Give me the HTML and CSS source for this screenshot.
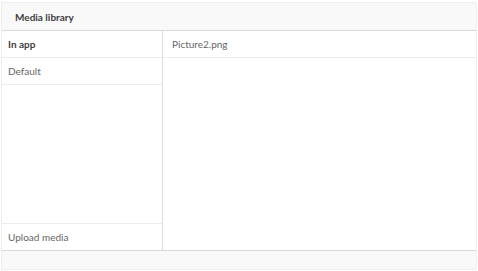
FILE: index.html
```html
<!DOCTYPE html>
<html>
<head>
<meta charset="utf-8">
<link rel="stylesheet" href="styles.css">
</head>
<body>
<div class="dialog">
  <div class="header"><span class="title">Media library</span></div>
  <div class="main">
    <div class="left">
      <div class="row bold">In app</div>
      <div class="row">Default</div>
      <div class="spacer"></div>
      <div class="row upload">Upload media</div>
    </div>
    <div class="right">
      <div class="row file">Picture2.png</div>
    </div>
  </div>
  <div class="footer"></div>
</div>
</body>
</html>
```
FILE: styles.css
```css
html, body { margin: 0; padding: 0; background: #fff; }
body { font-family: Lato, "Open Sans", sans-serif; color: #666666; }
.dialog {
  margin: 2px 1px 0 1px;
  width: 476px;
  height: 268px;
  box-sizing: border-box;
  border: 1px solid #eeeeee;
  display: flex;
  flex-direction: column;
}
.header {
  height: 27px;
  background: #f9f9f9;
  border-bottom: 1px solid #d9d9d9;
  display: flex;
  align-items: center;
  padding-left: 13px;
  flex: none;
}
.title { font-size: 10px; font-weight: 700; color: #404040; }
.main { flex: 1; display: flex; min-height: 0; border-bottom: 1px solid #d9d9d9; }
.left {
  width: 160px;
  border-right: 1px solid #dcdcdc;
  display: flex;
  flex-direction: column;
}
.right { flex: 1; display: flex; flex-direction: column; }
.row {
  height: 26px;
  border-bottom: 1px solid #ececec;
  display: flex;
  align-items: center;
  padding-left: 6px;
  font-size: 10px;
  flex: none;
}
.row.bold { font-weight: 700; color: #404040; }
.row.upload { border-bottom: none; border-top: 1px solid #ececec; }
.row.file { padding-left: 9px; }
.spacer { flex: 1; }
.footer { height: 18px; background: #f9f9f9; flex: none; }
```
